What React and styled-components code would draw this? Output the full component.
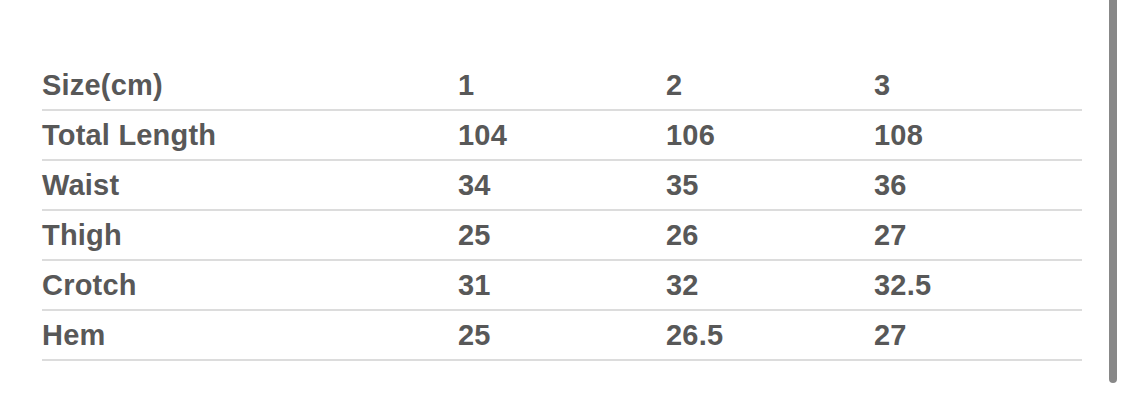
import { createGlobalStyle, styled } from 'styled-components';

const rows = [
	['Size(cm)', '1', '2', '3'],
	['Total Length', '104', '106', '108'],
	['Waist', '34', '35', '36'],
	['Thigh', '25', '26', '27'],
	['Crotch', '31', '32', '32.5'],
	['Hem', '25', '26.5', '27'],
];

const GlobalStyle = createGlobalStyle`
	html, body {
		margin: 0;
		padding: 0;
		background: #fff;
	}
`;

const Page = styled.div`
	display: flex;
	align-items: flex-start;
	width: 1125px;
	height: 416px;
	overflow: hidden;
	font-family: 'Liberation Sans', Arial, sans-serif;
`;

const Table = styled.div`
	width: 1040px;
	margin: 61px 0 0 42px;
`;

const Row = styled.div`
	display: grid;
	grid-template-columns: 416px 208px 208px 208px;
	align-items: center;
	height: 48px;
	border-bottom: 2px solid #dcdcdc;
`;

const Cell = styled.div`
	font-size: 29px;
	font-weight: 700;
	color: #585858;
	line-height: 1;
	letter-spacing: 0.2px;
	padding-top: 1px;
`;

const ScrollThumb = styled.div`
	width: 8px;
	height: 383px;
	margin-left: 27px;
	background: #888;
	border-radius: 0 0 4px 4px;
`;

const App = () => {
	return (
		<>
			<GlobalStyle />
			<Page>
				<Table>
					{rows.map((row) => (
						<Row key={row[0]}>
							{row.map((value, i) => (
								<Cell key={i}>{value}</Cell>
							))}
						</Row>
					))}
				</Table>
				<ScrollThumb />
			</Page>
		</>
	);
};

export default App;
